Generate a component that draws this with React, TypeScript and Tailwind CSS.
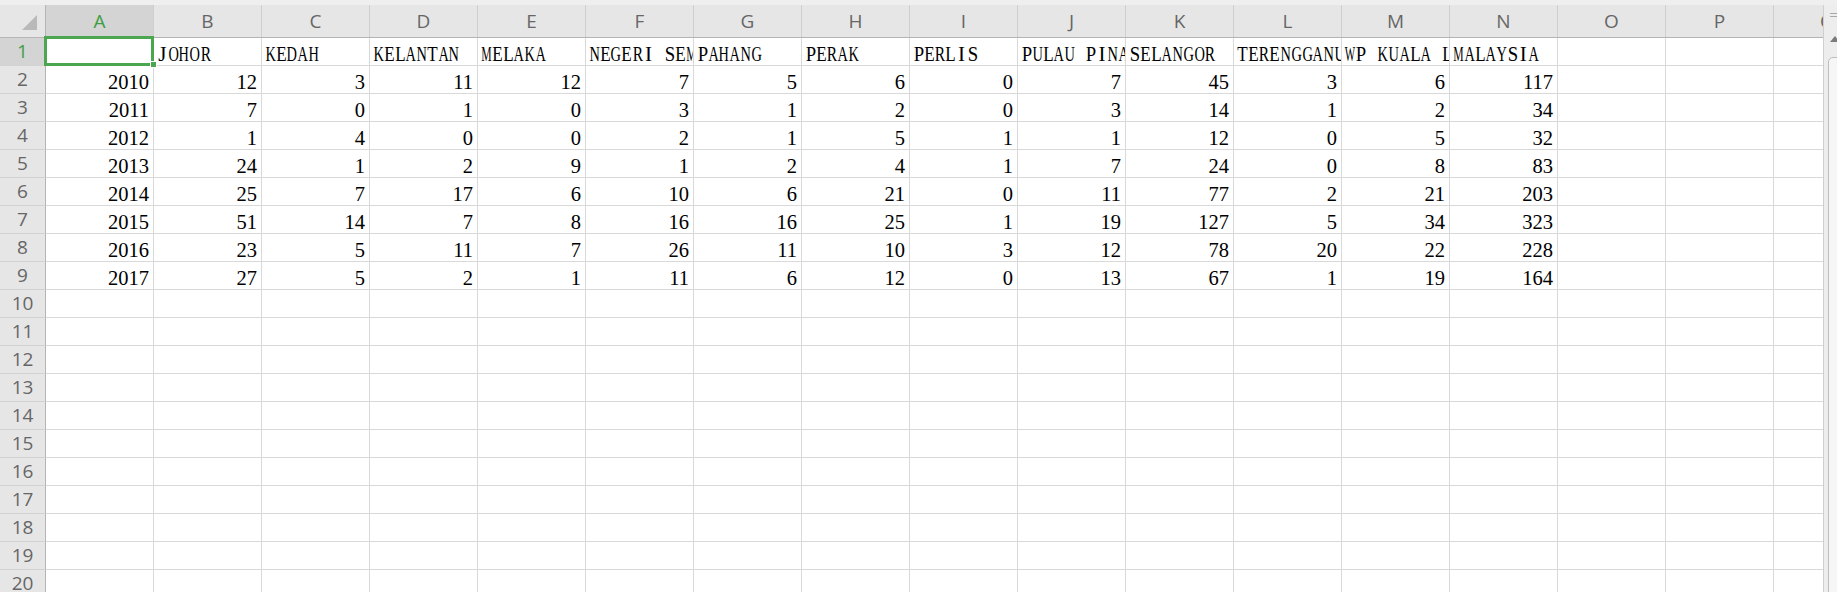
import React from 'react';

const COLS = ['A', 'B', 'C', 'D', 'E', 'F', 'G', 'H', 'I', 'J', 'K', 'L', 'M', 'N', 'O', 'P', 'Q'];
const HEAD = [
  '',
  'JOHOR',
  'KEDAH',
  'KELANTAN',
  'MELAKA',
  'NEGERI SEMBILAN',
  'PAHANG',
  'PERAK',
  'PERLIS',
  'PULAU PINANG',
  'SELANGOR',
  'TERENGGANU',
  'WP KUALA LUMPUR',
  'MALAYSIA',
];
const DATA: number[][] = [
  [2010, 12, 3, 11, 12, 7, 5, 6, 0, 7, 45, 3, 6, 117],
  [2011, 7, 0, 1, 0, 3, 1, 2, 0, 3, 14, 1, 2, 34],
  [2012, 1, 4, 0, 0, 2, 1, 5, 1, 1, 12, 0, 5, 32],
  [2013, 24, 1, 2, 9, 1, 2, 4, 1, 7, 24, 0, 8, 83],
  [2014, 25, 7, 17, 6, 10, 6, 21, 0, 11, 77, 2, 21, 203],
  [2015, 51, 14, 7, 8, 16, 16, 25, 1, 19, 127, 5, 34, 323],
  [2016, 23, 5, 11, 7, 26, 11, 10, 3, 12, 78, 20, 22, 228],
  [2017, 27, 5, 2, 1, 11, 6, 12, 0, 13, 67, 1, 19, 164],
];

const GW: Record<string, number> = {
  A: 0.722, B: 0.667, C: 0.667, D: 0.722, E: 0.611, F: 0.556, G: 0.722, H: 0.722, I: 0.333,
  J: 0.389, K: 0.722, L: 0.611, M: 0.889, N: 0.722, O: 0.722, P: 0.556, Q: 0.722, R: 0.667,
  S: 0.556, T: 0.611, U: 0.722, V: 0.722, W: 0.944, X: 0.722, Y: 0.722, Z: 0.611,
};

function MonoText({ text }: { text: string }) {
  return (
    <span className="flex whitespace-nowrap">
      {text.split('').map((c, i) => {
        const w = (GW[c] ?? 0.5) * 21;
        const s = Math.min(1, 10.4 / w);
        return (
          <span key={i} className="flex w-[10.8px] shrink-0 justify-center">
            <span className="shrink-0" style={{ transform: `scaleX(${s})` }}>
              {c === ' ' ? '\u00a0' : c}
            </span>
          </span>
        );
      })}
    </span>
  );
}

const serif = "font-['Liberation_Serif','Times_New_Roman',serif]";

export default function App() {
  const rows = Array.from({ length: 20 }, (_, i) => i + 1);
  return (
    <div className="relative flex h-[592px] w-[1837px] flex-col overflow-hidden bg-white">
      <div className="h-[5px] shrink-0 bg-[#efefef]" />
      <div className="flex min-h-0 flex-1">
        <div className="flex w-[1823px] shrink-0 flex-col overflow-hidden">
          {/* column header */}
          <div className="flex h-[33px] shrink-0 border-b border-[#b4b4b4] bg-[#e6e6e6] font-['Open_Sans','Noto_Sans',sans-serif] text-[19px] text-[#666666]">
            <div className="relative w-[46px] shrink-0 border-r border-[#b4b4b4]">
              <svg className="absolute left-[21px] top-[10px]" width="17" height="16" viewBox="0 0 17 16">
                <polygon points="16,0 16,15 1,15" fill="#b9b9b9" />
              </svg>
            </div>
            {COLS.map((c, i) => (
              <div
                key={c}
                className={`flex w-[108px] shrink-0 items-center justify-center border-r border-[#cfcfcf] ${
                  i === 0 ? 'bg-[#d4d4d4] text-[#3f9d44]' : ''
                }`}
              >
                {c}
              </div>
            ))}
          </div>
          {/* rows */}
          {rows.map((r) => (
            <div key={r} className="flex h-[28px] shrink-0">
              <div
                className={`flex w-[46px] shrink-0 items-center justify-center border-b border-r border-b-[#d2d2d2] border-r-[#b4b4b4] font-['Open_Sans','Noto_Sans',sans-serif] text-[19px] ${
                  r === 1 ? 'bg-[#d4d4d4] text-[#3f9d44]' : 'bg-[#e6e6e6] text-[#666666]'
                }`}
              >
                {r}
              </div>
              {COLS.map((c, ci) => {
                if (r === 1) {
                  const t = HEAD[ci] ?? '';
                  return (
                    <div
                      key={c}
                      className={`flex w-[108px] shrink-0 items-end overflow-hidden border-b border-r border-[#d9d9d9] pl-[3px] text-[21px] leading-[21px] text-black ${serif}`}
                    >
                      {t && <MonoText text={t} />}
                    </div>
                  );
                }
                const row = DATA[r - 2];
                const v = row && ci < row.length ? row[ci] : null;
                return (
                  <div
                    key={c}
                    className={`flex w-[108px] shrink-0 items-end justify-end overflow-hidden border-b border-r border-[#d9d9d9] pb-[1px] pr-[4px] text-[20.5px] leading-[20px] text-black ${serif}`}
                  >
                    {v !== null && <span>{v}</span>}
                  </div>
                );
              })}
            </div>
          ))}
        </div>
        {/* vertical scrollbar */}
        <div className="relative w-[14px] shrink-0 overflow-hidden border-l border-[#cfcfcf] bg-[#ededed]">
          <div className="absolute left-[6px] top-[8px] h-[1px] w-[10px] bg-[#a8a8a8]" />
          <div className="absolute left-[6px] top-[11px] h-[1px] w-[10px] bg-[#a8a8a8]" />
          <svg className="absolute left-[6px] top-[31px]" width="10" height="7" viewBox="0 0 10 7">
            <polygon points="5,0 10,6 0,6" fill="#7a7a7a" />
          </svg>
          <div className="absolute left-[4px] top-[52px] h-[600px] w-[20px] rounded-[5px] border border-[#bdbdbd] bg-[#f6f6f6]" />
        </div>
      </div>
      {/* selection */}
      <div className="pointer-events-none absolute left-[44px] top-[36px] h-[30px] w-[110px] border-[3px] border-[#4aa64f]" />
      <div className="pointer-events-none absolute left-[150px] top-[61px] h-[7px] w-[7px] border border-white bg-[#4aa64f]" />
    </div>
  );
}
